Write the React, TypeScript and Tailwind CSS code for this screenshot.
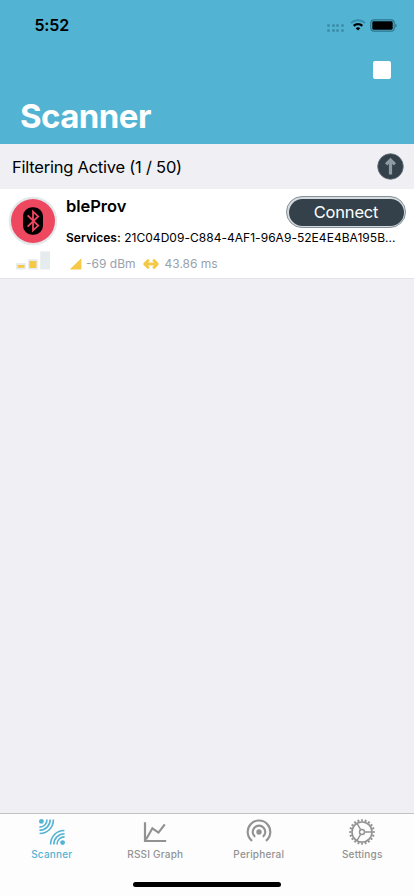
import React from "react";

const WifiIcon = () => (
  <svg width="16" height="12" viewBox="0 0 16 12" fill="none">
    <path d="M1 4.2C4.8.3 11.2.3 15 4.2" stroke="#358fae" strokeWidth="1.9" />
    <path d="M3.7 6.9c2.4-2.4 6.2-2.4 8.6 0" stroke="#000" strokeWidth="2.3" />
    <path d="M8 11.6 5.7 9.2c1.3-1.2 3.3-1.2 4.6 0z" fill="#000" />
  </svg>
);

const BatteryIcon = () => (
  <svg width="28" height="13" viewBox="0 0 28 13">
    <rect x=".8" y=".8" width="23.4" height="11.4" rx="3.2" fill="none" stroke="#2b748e" strokeWidth="1.2" />
    <rect x="2.3" y="2.3" width="20.4" height="8.4" rx="1.4" fill="#000" />
    <path d="M25.3 4.4c1.8.6 1.8 3.6 0 4.2z" fill="#2b748e" />
  </svg>
);

const BluetoothBadge = () => (
  <svg width="50" height="50" viewBox="0 0 50 50" fill="none">
    <circle cx="25" cy="25" r="24.3" fill="#e4e8eb" />
    <circle cx="25" cy="25" r="22" fill="#ee4760" />
    <rect x="15" y="11.3" width="20" height="27.4" rx="9" fill="#000" />
    <path d="M19.6 19.4 30.2 29.6 25 34.4V15.6l5.2 4.8L19.6 30.6" stroke="#ee4760" strokeWidth="1.8" />
  </svg>
);

const SignalBars = () => (
  <svg width="34" height="19" viewBox="0 0 34 19">
    <g fill="#e6ebed">
      <rect x="0" y="12.2" width="9.8" height="6.3" />
      <rect x="12" y="8.2" width="9.8" height="10.3" />
      <rect x="24.2" y=".4" width="9.8" height="18.1" />
    </g>
    <rect x="1.7" y="14" width="6.8" height="2.8" rx=".6" fill="#f5c945" />
    <rect x="13.4" y="9.9" width="7" height="7" rx=".6" fill="#f5c945" />
  </svg>
);

const ScannerIcon = () => (
  <svg width="28" height="28" viewBox="0 0 28 28" fill="none" stroke="#54b3d2" strokeWidth="1.6">
    <circle cx="3.4" cy="3.4" r="2.4" fill="#54b3d2" stroke="none" />
    <path d="M1.4 9.1C5.8 9.1 9 6 9 1.4M1.4 12.3c6.2 0 10.8-4.7 10.8-10.9M1.6 15.5c8 0 13.8-6 13.8-14.1" />
    <circle cx="24.6" cy="24.6" r="2.4" fill="#54b3d2" stroke="none" />
    <path d="M26.6 18.9c-4.4 0-7.6 3.1-7.6 7.7M26.6 15.7c-6.2 0-10.8 4.7-10.8 10.9M26.4 12.5c-8 0-13.8 6-13.8 14.1" />
  </svg>
);

const GraphIcon = () => (
  <svg width="28" height="28" viewBox="0 0 28 28" fill="none" stroke="#929292" strokeWidth="2.2">
    <path d="M4 4.2V23h21.2" />
    <path d="m5 21.5 6.4-11.2 6.1 4.3 6.3-8.2" />
  </svg>
);

const PeripheralIcon = () => (
  <svg width="28" height="28" viewBox="0 0 28 28" fill="none" stroke="#929292" strokeWidth="2.1">
    <circle cx="14" cy="14" r="2.7" fill="#929292" stroke="none" />
    <path d="M10.1 18.9a6.3 6.3 0 1 1 7.8 0" />
    <path d="M7.1 22.8a11.3 11.3 0 1 1 13.8 0" />
  </svg>
);

const SettingsIcon = () => (
  <svg width="28" height="28" viewBox="0 0 28 28" fill="none" stroke="#929292">
    <circle cx="14" cy="14" r="10" strokeWidth="1.6" />
    <circle cx="14" cy="14" r="11.7" strokeWidth="2.2" pathLength="80" strokeDasharray="2 2" strokeDashoffset="1" />
    <circle cx="14" cy="14" r="2.5" strokeWidth="1.4" />
    <path d="M16.5 14H24M12.75 11.8 9 5.4M12.75 16.2 9 22.6" strokeWidth="1.4" />
  </svg>
);

const tabs = [
  { label: "Scanner", icon: <ScannerIcon />, color: "text-[#54b3d2]" },
  { label: "RSSI Graph", icon: <GraphIcon />, color: "text-[#929292]" },
  { label: "Peripheral", icon: <PeripheralIcon />, color: "text-[#929292]" },
  { label: "Settings", icon: <SettingsIcon />, color: "text-[#929292]" },
];

export default function App() {
  return (
    <div className="flex h-[896px] w-[414px] flex-col overflow-hidden bg-[#efeff4] font-[Inter,sans-serif] text-black">
      <header className="flex h-[144px] shrink-0 flex-col bg-[#52b3d3]">
        <div className="flex h-[50px] items-center justify-between pr-[16px] pl-[34.5px]">
          <span className="text-[16px] leading-5 font-semibold tracking-[-0.2px]">5:52</span>
          <div className="flex items-center">
            <div className="mt-[5px] mr-[6px] grid grid-cols-4 gap-x-[1.6px] gap-y-[2px]">
              {Array.from({ length: 8 }, (_, i) => (
                <i key={i} className="size-[3px] rounded-full bg-[#3b8fac]" />
              ))}
            </div>
            <WifiIcon />
            <div className="ml-[4px]"><BatteryIcon /></div>
          </div>
        </div>
        <div className="flex h-[42px] justify-end pt-[11px] pr-[23px]">
          <button aria-label="Stop" className="size-[18px] rounded-[2px] bg-white" />
        </div>
        <h1 className="pt-[4px] pl-[20px] text-[33px] leading-[41px] font-bold tracking-[-0.55px] text-white">Scanner</h1>
      </header>
      <div className="flex h-[45px] shrink-0 items-center justify-between pr-[10px] pl-[12px]">
        <span className="text-[16.5px] leading-6 tracking-[-0.23px]">Filtering Active (1 / 50)</span>
        <svg width="27" height="27" viewBox="0 0 27 27" fill="none">
          <circle cx="13.5" cy="13.5" r="12.8" fill="#34414b" stroke="#66737c" strokeWidth=".8" />
          <path d="M13.5 21.4V7.5M9.1 11.4l4.4-4.3 4.4 4.3" stroke="#8e9ba2" strokeWidth="3.2" />
        </svg>
      </div>
      <main className="flex h-[90px] shrink-0 border-b border-[#e3e3e6] bg-white">
        <div className="flex w-[66px] shrink-0 flex-col items-center pt-[7px]">
          <BluetoothBadge />
          <div className="mt-[5px]"><SignalBars /></div>
        </div>
        <div className="flex min-w-0 grow flex-col">
          <div className="flex h-[40px] justify-between pr-[8px]">
            <h2 className="pt-[5px] text-[16.5px] leading-6 font-semibold tracking-[-0.05px]">bleProv</h2>
            <button className="mt-[7px] h-[32px] w-[120px] shrink-0 rounded-full border-[1.5px] border-[#85929b] bg-[#d5dadd] p-[1.5px]">
              <span className="flex h-full items-center justify-center rounded-full bg-[#34414b] pt-px text-[16.5px] tracking-[-0.2px] text-white">Connect</span>
            </button>
          </div>
          <p className="text-[12px] leading-[18px] tracking-[0.03px] whitespace-nowrap">
            <b className="font-semibold">Services:</b> 21C04D09-C884-4AF1-96A9-52E4E4BA195B...
          </p>
          <div className="mt-[9px] flex items-center pl-[3px] text-[12px] leading-4 tracking-[0px] text-[#98a2aa]">
            <svg width="13" height="12" viewBox="0 0 13 12"><path d="M.7 11.6 12.3.3v11.3z" fill="#f5c945" /></svg>
            <span className="ml-[4px]">-69 dBm</span>
            <svg className="ml-[7px]" width="16" height="12" viewBox="0 0 16 12" fill="none" stroke="#f5c945" strokeWidth="2.8" strokeLinejoin="round">
              <path d="M2 6h12M5.8 1.6 1.7 6l4.1 4.4M10.2 1.6 14.3 6l-4.1 4.4" />
            </svg>
            <span className="ml-[6px]">43.86 ms</span>
          </div>
        </div>
      </main>
      <div className="grow" />
      <nav className="h-[83px] shrink-0 border-t border-[#c3c3c7] bg-[#fdfdfd]">
        <div className="grid h-[64px] grid-cols-4">
          {tabs.map((t) => (
            <div key={t.label} className={`flex flex-col items-center pt-[4px] ${t.color}`}>
              {t.icon}
              <span className="mt-[2px] text-[10px] leading-[13px] font-medium tracking-[0.2px]">{t.label}</span>
            </div>
          ))}
        </div>
        <div className="mx-auto mt-[4px] h-[5px] w-[148px] rounded-full bg-black" />
      </nav>
    </div>
  );
}
